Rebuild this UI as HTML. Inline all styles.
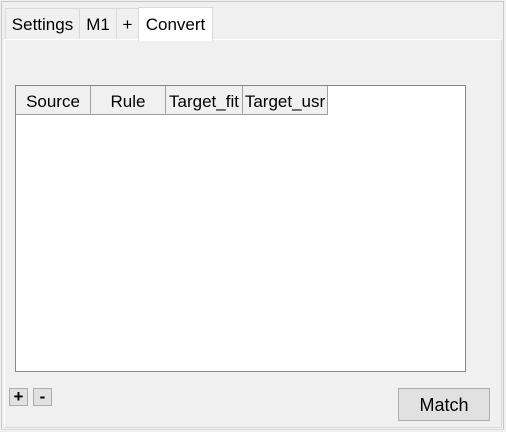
<!DOCTYPE html>
<html><head><style>
body{margin:0;width:506px;height:432px;background:#f0f0f0;position:relative;overflow:hidden;font-family:"Liberation Sans",sans-serif;color:#000}
.a{position:absolute;box-sizing:border-box}
.tab{position:absolute;top:8px;height:31px;border:1px solid #d9d9d9;border-bottom:none;background:#f0f0f0;font-size:17px;line-height:32px;text-align:center;box-sizing:border-box}
.h{position:absolute;top:0;height:29px;font-size:17px;line-height:32px;text-align:center;white-space:nowrap;background:#f0f0f0}
.v{position:absolute;top:0;width:1px;height:29px;background:#a0a0a0}
</style></head><body>
<div class="a" style="left:1px;top:1px;width:503px;height:429px;border:1px solid #c8c8c8;border-bottom-color:#dcdcdc"></div>
<div class="a" style="left:4px;top:39px;width:498px;height:389px;border:1px solid #d9d9d9;border-top-color:#fff;border-left-color:#fff;background:#f0f0f0"></div>
<div class="tab" style="left:5px;width:75px">Settings</div>
<div class="tab" style="left:79px;width:38px">M1</div>
<div class="tab" style="left:116px;width:23px">+</div>
<div class="tab" style="left:138px;top:7px;height:34px;width:75px;background:#fff;line-height:33px">Convert</div>
<div class="a" style="left:15px;top:85px;width:451px;height:287px;border:1px solid #828790;background:#fff">
<div class="h" style="left:0;width:74px">Source</div>
<div class="h" style="left:75px;width:74px">Rule</div>
<div class="h" style="left:150px;width:76px">Target_fit</div>
<div class="h" style="left:227px;width:84px">Target_usr</div>
<div class="v" style="left:74px"></div>
<div class="v" style="left:149px"></div>
<div class="v" style="left:226px"></div>
<div class="v" style="left:311px"></div>
<div class="a" style="left:0;top:28px;width:312px;height:1px;background:#a0a0a0"></div>
</div>
<div class="a" style="left:9px;top:388px;width:19px;height:18px;border:1px solid #adadad;background:#e1e1e1;font:bold 17px/15px 'Liberation Sans',sans-serif;text-align:center">+</div>
<div class="a" style="left:33px;top:388px;width:19px;height:18px;border:1px solid #adadad;background:#e1e1e1;font:bold 17px/15px 'Liberation Sans',sans-serif;text-align:center">-</div>
<div class="a" style="left:398px;top:388px;width:92px;height:33px;border:1px solid #adadad;background:#e1e1e1;font-size:18px;line-height:33px;text-align:center">Match</div>
</body></html>
